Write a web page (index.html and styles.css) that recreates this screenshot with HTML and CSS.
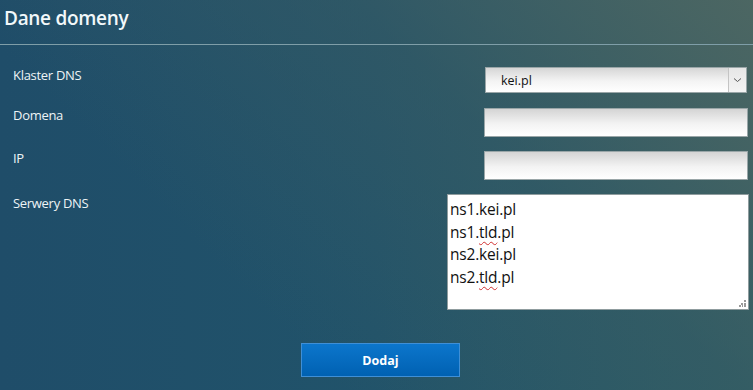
FILE: index.html
```html
<!DOCTYPE html>
<html lang="pl">
<head>
  <meta charset="utf-8">
  <title>Dane domeny</title>
  <link rel="stylesheet" href="styles.css">
</head>
<body>
  <div class="panel">
    <h1 class="title">Dane domeny</h1>
    <form class="form">
      <div class="row row-select">
        <label class="label">Klaster DNS</label>
        <div class="select">
          <span class="select-value">kei.pl</span>
          <span class="select-arrow">
            <svg width="9" height="6" viewBox="0 0 9 6"><path d="M1 1.5 L4.5 4.5 L8 1.5" fill="none" stroke="#555" stroke-width="1"/></svg>
          </span>
        </div>
      </div>
      <div class="row row-input">
        <label class="label">Domena</label>
        <input class="field" type="text">
      </div>
      <div class="row row-input">
        <label class="label">IP</label>
        <input class="field" type="text">
      </div>
      <div class="row row-area">
        <label class="label">Serwery DNS</label>
        <div class="area">
          <div class="area-line">ns1.kei.pl</div>
          <div class="area-line">ns1.<span class="typo">tld</span>.pl</div>
          <div class="area-line">ns2.kei.pl</div>
          <div class="area-line">ns2.<span class="typo">tld</span>.pl</div>
          <svg class="grip" width="7" height="7" viewBox="0 0 7 7"><g fill="#999"><rect x="5" y="0" width="2" height="2"/><rect x="2" y="3" width="2" height="2"/><rect x="5" y="3" width="2" height="2"/><rect x="0" y="5" width="2" height="2"/><rect x="3" y="5" width="1" height="2"/><rect x="5" y="5" width="2" height="2"/></g></svg>
        </div>
      </div>
      <div class="actions">
        <button class="btn" type="button">Dodaj</button>
      </div>
    </form>
  </div>
</body>
</html>
```
FILE: styles.css
```css
html, body {
    margin: 0;
    height: 100%;
}

body {
    font-family: "Open Sans", "Noto Sans", sans-serif;
    color: #eef4f6;
    background:
        linear-gradient(225deg, rgba(82, 104, 98, 0.85) 0%, rgba(60, 92, 98, 0.5) 35%, rgba(40, 90, 104, 0) 70%),
        linear-gradient(90deg, #1f4d69 0%, #21536a 50%, #2b5d66 100%);
    overflow: hidden;
}

.panel {
    width: 753px;
    height: 390px;
}

.title {
    margin: 0;
    padding: 5px 0 0 4px;
    height: 39px;
    font-size: 19px;
    font-weight: 600;
    letter-spacing: -0.3px;
    color: #f2f8fa;
    border-bottom: 1px solid #7f9ea8;
}

.form {
    padding: 0 5px 0 13px;
}

.row {
    display: flex;
    justify-content: space-between;
}

.label {
    font-size: 13px;
    letter-spacing: -0.3px;
    line-height: 16px;
}

.row-select {
    margin-top: 22px;
    height: 26px;
}

.select {
    width: 262px;
    height: 26px;
    border: 1px solid #9aa6a8;
    background: linear-gradient(#d6d6d6, #f4f4f4 55%, #ffffff);
    display: flex;
    align-items: center;
    justify-content: space-between;
    box-sizing: border-box;
    margin-right: 1px;
}
.select-value {
    padding-left: 15px;
    font-size: 12.5px;
    color: #111;
}
.select-arrow {
    width: 17px;
    height: 24px;
    border-left: 1px solid #c4c4c4;
    background: linear-gradient(#e6e6e6, #f4f4f4);
    display: flex;
    align-items: center;
    justify-content: center;
}

.row-input {
    margin-top: 15px;
    height: 28px;
}
.row-input .label {
    margin-top: -1px;
}

.field {
    width: 264px;
    height: 29px;
    box-sizing: border-box;
    border: 1px solid #9aa6a8;
    background: linear-gradient(#d4d4d4, #f3f3f3 55%, #ffffff);
    margin: 0;
}

.row-area {
    margin-top: 15px;
}
.row-area .label {
    margin-top: 1px;
}

.area {
    position: relative;
    width: 302px;
    height: 116px;
    box-sizing: border-box;
    border: 1px solid #8f9c9e;
    background: #ffffff;
    color: #111;
    font-size: 15.5px;
    padding: 3px 0 0 2px;
    margin-right: -1px;
}
.area-line {
    line-height: 22.5px;
    letter-spacing: -0.2px;
}
.typo {
    text-decoration: underline wavy #d03030;
    text-decoration-thickness: 1px;
    text-underline-offset: 3px;
}
.grip {
    position: absolute;
    right: 2px;
    bottom: 2px;
}

.actions {
    display: flex;
    justify-content: center;
    margin-top: 33px;
}

.btn {
    width: 159px;
    height: 34px;
    border: 1px solid #3f8fd6;
    background: linear-gradient(#0c76cc, #0061b2);
    color: #ffffff;
    font-family: "Open Sans", "Noto Sans", sans-serif;
    font-size: 12.5px;
    font-weight: 700;
}
```
